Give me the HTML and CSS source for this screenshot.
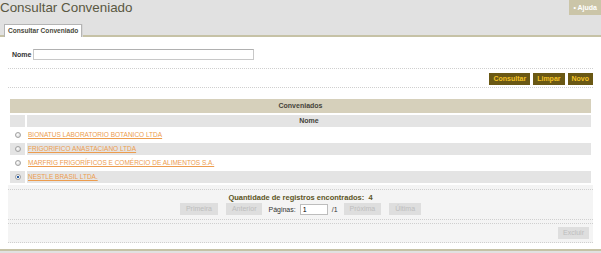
FILE: index.html
```html
<!DOCTYPE html>
<html lang="pt-BR">
<head>
    <meta charset="UTF-8">
    <title>Consultar Conveniado</title>
    <link rel="stylesheet" href="styles.css">
</head>
<body>
    <div class="topbar">
        <h1 class="page-title">Consultar Conveniado</h1>
        <a class="help-link" href="#">&bull; Ajuda</a>
    </div>

    <div class="tabbar">
        <span class="tab">Consultar Conveniado</span>
    </div>

    <div class="content">
        <div class="filter-row">
            <label for="nome">Nome</label>
            <input type="text" id="nome" class="text-input">
        </div>

        <div class="action-row">
            <button class="btn">Consultar</button>
            <button class="btn">Limpar</button>
            <button class="btn">Novo</button>
        </div>

        <table class="grid">
            <tr>
                <th colspan="2" class="grid-title">Conveniados</th>
            </tr>
            <tr class="grid-head">
                <th class="col-radio"></th>
                <th>Nome</th>
            </tr>
            <tr>
                <td class="col-radio"><input type="radio" name="conv" class="radio"></td>
                <td><a href="#" class="row-link">BIONATUS LABORATORIO BOTANICO LTDA</a></td>
            </tr>
            <tr class="alt">
                <td class="col-radio"><input type="radio" name="conv" class="radio"></td>
                <td><a href="#" class="row-link">FRIGORIFICO ANASTACIANO LTDA</a></td>
            </tr>
            <tr>
                <td class="col-radio"><input type="radio" name="conv" class="radio"></td>
                <td><a href="#" class="row-link">MARFRIG FRIGORÍFICOS E COMÉRCIO DE ALIMENTOS S.A.</a></td>
            </tr>
            <tr class="alt">
                <td class="col-radio"><input type="radio" name="conv" class="radio" checked></td>
                <td><a href="#" class="row-link">NESTLE BRASIL LTDA.</a></td>
            </tr>
        </table>

        <div class="footer">
            <div class="pager">
                <div class="pager-count">Quantidade de registros encontrados:&nbsp; 4</div>
                <div class="pager-controls">
                    <button class="btn-off" disabled>Primeira</button>
                    <button class="btn-off" disabled>Anterior</button>
                    <span class="pager-label">Páginas:</span>
                    <input type="text" class="page-input" value="1">
                    <span class="pager-label">/1</span>
                    <button class="btn-off" disabled>Próxima</button>
                    <button class="btn-off" disabled>Última</button>
                </div>
            </div>
            <div class="footer-actions">
                <button class="btn-off" disabled>Excluir</button>
            </div>
        </div>
    </div>
</body>
</html>
```

FILE: styles.css
```css
body {
    margin: 0;
    background-color: #e1e1e1;
    font-family: "Liberation Sans", Arial, sans-serif;
    color: #333;
}
.topbar {
    display: flex;
    justify-content: space-between;
    align-items: flex-start;
    height: 24px;
}
.page-title {
    margin: 0;
    font-size: 13.4px;
    font-weight: normal;
    line-height: 15px;
    color: #5a5842;
}
.help-link {
    display: block;
    height: 15px;
    line-height: 15px;
    padding: 0 4px;
    background-color: #cbc5a8;
    color: #fff;
    font-size: 7px;
    font-weight: bold;
    text-decoration: none;
}
.tabbar {
    display: flex;
    align-items: flex-start;
    height: 11px;
    padding-left: 4px;
    border-bottom: 2px solid #c6c2a6;
}
.tab {
    height: 12px;
    line-height: 12px;
    padding: 0 3px;
    border: 1px solid #b4b4b4;
    border-bottom: none;
    background-color: #fff;
    box-shadow: 1px 0 0 #d6d6d6;
    font-size: 6.6px;
    font-weight: bold;
    color: #4a4a3c;
}
.content {
    background-color: #fff;
    padding: 12px 8px 6px;
    border-bottom: 2px solid #c6c2a6;
}
.filter-row {
    display: flex;
    align-items: center;
    gap: 2px;
    padding: 0 0 8px 4px;
    border-bottom: 1px dotted #cfcfcf;
}
.filter-row label {
    font-size: 7px;
    font-weight: bold;
    color: #333;
}
.text-input {
    box-sizing: border-box;
    width: 221px;
    height: 11px;
    margin: 0;
    padding: 0;
    border: 1px solid #c8c8c8;
    border-top-color: #b0b0b0;
}
.action-row {
    display: flex;
    justify-content: flex-end;
    gap: 3px;
    padding: 4px 0 2px;
    border-bottom: 1px dotted #cfcfcf;
}
.btn {
    height: 12px;
    padding: 0 4px;
    border: none;
    background-color: #6a5814;
    color: #f3c224;
    font-family: inherit;
    font-size: 7px;
    font-weight: bold;
    line-height: 12px;
}
.grid {
    width: 100%;
    margin-top: 9px;
    border-spacing: 2px;
    font-size: 6.5px;
}
.grid th {
    padding: 0;
    font-size: 7px;
    font-weight: bold;
    color: #45433a;
    line-height: 10px;
}
.grid-title {
    height: 14px;
    background-color: #d6d0bb;
}
.grid-head th {
    height: 12px;
    background-color: #e4e4e4;
}
.grid td {
    height: 12px;
    padding: 0 0 0 1px;
    line-height: 10px;
}
.grid .alt td {
    background-color: #e4e4e4;
}
.col-radio {
    width: 15px;
    text-align: center;
}
.grid td.col-radio {
    padding: 0;
}
.radio {
    appearance: none;
    display: block;
    width: 6px;
    height: 6px;
    margin: 0 auto;
    border: 1px solid #a2a2a2;
    border-radius: 50%;
    background: radial-gradient(circle at 40% 40%, #fff, #cfcfcf);
}
.radio:checked {
    background: radial-gradient(circle, #1f4f8f 0, #2d62a8 35%, #fff 50%, #d8d8d8 100%);
}
.row-link {
    font-size: 6.5px;
    color: #ec9c4e;
    text-decoration: underline;
}
.footer {
    padding-top: 4px;
    background-color: #f4f4f4;
}
.pager {
    padding: 3px 0 4px;
    border-top: 1px dotted #cfcfcf;
    border-bottom: 1px dotted #cfcfcf;
    text-align: center;
}
.pager-count {
    height: 9px;
    line-height: 9px;
    font-size: 7.5px;
    font-weight: bold;
    color: #5c5424;
}
.pager-controls {
    display: flex;
    justify-content: center;
    align-items: center;
    gap: 4px;
    margin-top: 1px;
    height: 12px;
}
.btn-off {
    height: 12px;
    margin: 0 2px;
    padding: 0 6px;
    border: none;
    background-color: #dedede;
    color: #bdbdbd;
    font-family: inherit;
    font-size: 7px;
    line-height: 12px;
}
.pager-label {
    font-size: 7px;
    color: #333;
}
.page-input {
    box-sizing: border-box;
    width: 28px;
    height: 11px;
    padding: 0 2px;
    border: 1px solid #bdbdbd;
    font-family: inherit;
    font-size: 7px;
}
.footer-actions {
    display: flex;
    justify-content: flex-end;
    margin-top: 3px;
    padding: 3px 2px 3px;
    border-top: 1px dotted #cfcfcf;
    border-bottom: 1px dotted #cfcfcf;
}
.footer-actions .btn-off {
    padding: 0 5px;
}
```
